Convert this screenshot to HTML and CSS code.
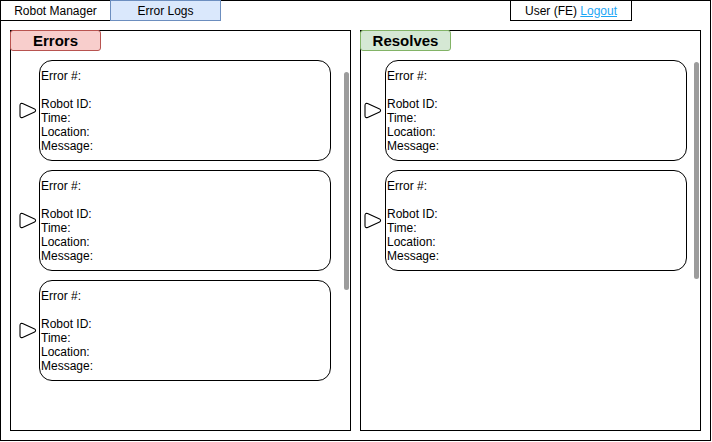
FILE: index.html
```html
<!doctype html>
<html lang="en">
  <head>
    <meta charset="UTF-8" />
    <meta name="viewport" content="width=device-width, initial-scale=1.0" />
    <title>Robot Manager - Error Logs</title>
    <link rel="stylesheet" href="styles.css">
  </head>
  <body>
    <div class="frame">
      <nav class="topbar">
        <div class="tab">Robot Manager</div>
        <div class="tab tab-active">Error Logs</div>
        <div class="user">User (FE)&nbsp;<a href="#" class="logout">Logout</a></div>
      </nav>

      <div class="panels">
        <!-- errors column -->
        <section class="panel panel-errors">
          <div class="panel-title title-errors">Errors</div>
          <div class="card-list">
            <div class="card-row">
              <svg class="play" width="18" height="17" viewBox="0 0 18 17"><path d="M1 3.5 Q1 0.6 3.6 1.6 L15.6 6.9 Q17.6 8.5 15.6 10.1 L3.6 15.4 Q1 16.4 1 13.5 Z" /></svg>
              <div class="card">
                <span>Error #:</span>
                <span>&nbsp;</span>
                <span>Robot ID:</span>
                <span>Time:</span>
                <span>Location:</span>
                <span>Message:</span>
              </div>
            </div>
            <div class="card-row">
              <svg class="play" width="18" height="17" viewBox="0 0 18 17"><path d="M1 3.5 Q1 0.6 3.6 1.6 L15.6 6.9 Q17.6 8.5 15.6 10.1 L3.6 15.4 Q1 16.4 1 13.5 Z" /></svg>
              <div class="card">
                <span>Error #:</span>
                <span>&nbsp;</span>
                <span>Robot ID:</span>
                <span>Time:</span>
                <span>Location:</span>
                <span>Message:</span>
              </div>
            </div>
            <div class="card-row">
              <svg class="play" width="18" height="17" viewBox="0 0 18 17"><path d="M1 3.5 Q1 0.6 3.6 1.6 L15.6 6.9 Q17.6 8.5 15.6 10.1 L3.6 15.4 Q1 16.4 1 13.5 Z" /></svg>
              <div class="card">
                <span>Error #:</span>
                <span>&nbsp;</span>
                <span>Robot ID:</span>
                <span>Time:</span>
                <span>Location:</span>
                <span>Message:</span>
              </div>
            </div>
          </div>
          <div class="scrollbar"></div>
        </section>

        <!-- resolves column -->
        <section class="panel panel-resolves">
          <div class="panel-title title-resolves">Resolves</div>
          <div class="card-list">
            <div class="card-row">
              <svg class="play" width="18" height="17" viewBox="0 0 18 17"><path d="M1 3.5 Q1 0.6 3.6 1.6 L15.6 6.9 Q17.6 8.5 15.6 10.1 L3.6 15.4 Q1 16.4 1 13.5 Z" /></svg>
              <div class="card">
                <span>Error #:</span>
                <span>&nbsp;</span>
                <span>Robot ID:</span>
                <span>Time:</span>
                <span>Location:</span>
                <span>Message:</span>
              </div>
            </div>
            <div class="card-row">
              <svg class="play" width="18" height="17" viewBox="0 0 18 17"><path d="M1 3.5 Q1 0.6 3.6 1.6 L15.6 6.9 Q17.6 8.5 15.6 10.1 L3.6 15.4 Q1 16.4 1 13.5 Z" /></svg>
              <div class="card">
                <span>Error #:</span>
                <span>&nbsp;</span>
                <span>Robot ID:</span>
                <span>Time:</span>
                <span>Location:</span>
                <span>Message:</span>
              </div>
            </div>
          </div>
          <div class="scrollbar"></div>
        </section>
      </div>
    </div>
  </body>
</html>
```

FILE: styles.css
```css
:root {
  --line: #000;
  --tab-bg: #dae8fc;
  --tab-border: #6c8ebf;
  --err-bg: #f8cecc;
  --err-border: #b85450;
  --ok-bg: #d5e8d4;
  --ok-border: #82b366;
  --link: #1ba6f5;
  --scroll: #9c9c9c;
}

* {
  box-sizing: border-box;
  margin: 0;
  padding: 0;
}

body {
  font-family: "Liberation Sans", Arial, sans-serif;
  font-size: 12px;
  color: #000;
  background: #fff;
}

.frame {
  width: 711px;
  height: 441px;
  border: 1px solid var(--line);
}

.topbar {
  display: flex;
  height: 21px;
  margin: -1px -1px 0;
}

.tab {
  width: 111px;
  height: 21px;
  border: 1px solid var(--line);
  display: flex;
  align-items: center;
  justify-content: center;
}

.tab-active {
  margin-left: -1px;
  background-color: var(--tab-bg);
  border-color: var(--tab-border);
}

.user {
  width: 122px;
  height: 21px;
  margin-left: 289px;
  border: 1px solid var(--line);
  display: flex;
  align-items: center;
  justify-content: center;
}

.logout {
  color: var(--link);
  text-decoration: underline;
}

.panels {
  display: grid;
  grid-template-columns: 341px 341px;
  column-gap: 9px;
  padding: 9px 8px 9px 9px;
}

.panel {
  position: relative;
  height: 401px;
  border: 1px solid var(--line);
}

.panel-title {
  width: 91px;
  height: 21px;
  margin: -1px 0 0 -1px;
  border: 1px solid;
  border-radius: 3px;
  font-size: 15px;
  font-weight: 700;
  display: flex;
  align-items: center;
  justify-content: center;
}

.title-errors {
  background-color: var(--err-bg);
  border-color: var(--err-border);
}

.title-resolves {
  background-color: var(--ok-bg);
  border-color: var(--ok-border);
}

.card-list {
  display: flex;
  flex-direction: column;
  gap: 9px;
  padding-top: 9px;
}

.card-row {
  display: flex;
  align-items: center;
}

.panel-errors .card-row {
  padding-left: 8px;
  gap: 2px;
}

.panel-resolves .card-row {
  padding-left: 3px;
  gap: 3px;
}

.play {
  flex: none;
}

.play path {
  fill: none;
  stroke: #000;
  stroke-width: 1.1;
  stroke-linejoin: round;
}

.card {
  height: 101px;
  border: 1px solid var(--line);
  border-radius: 13px;
  display: flex;
  flex-direction: column;
  justify-content: center;
  line-height: 14px;
  padding-left: 1px;
}

.panel-errors .card {
  width: 292px;
}

.panel-resolves .card {
  width: 302px;
}

.scrollbar {
  position: absolute;
  left: 333px;
  width: 5px;
  border-radius: 3px;
  background-color: var(--scroll);
}

.panel-errors .scrollbar {
  top: 41px;
  height: 218px;
}

.panel-resolves .scrollbar {
  top: 31px;
  height: 217px;
}
```
